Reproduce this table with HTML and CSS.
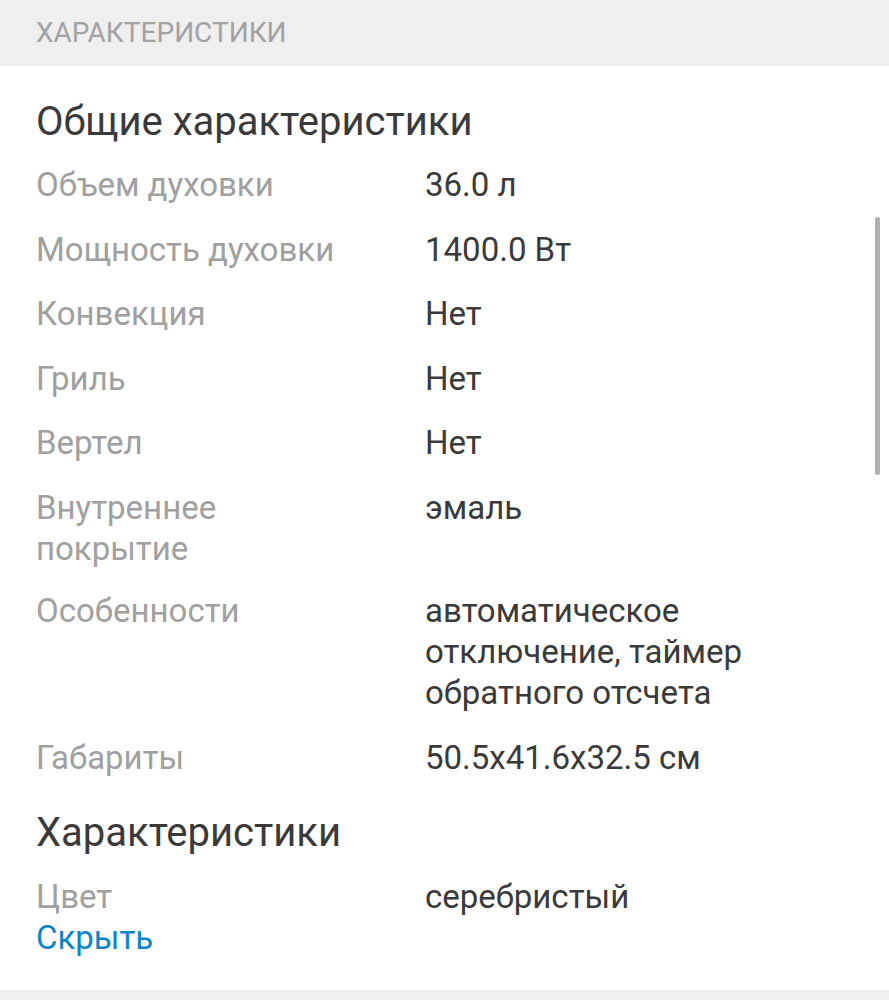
FILE: index.html
```html
<!DOCTYPE html>
<html lang="ru">
<head>
<meta charset="utf-8">
<link rel="stylesheet" href="styles.css">
</head>
<body>
<div class="page">
  <div class="band">ХАРАКТЕРИСТИКИ</div>
  <div class="content">
    <h2 class="group-title">Общие характеристики</h2>
    <div class="specs">
      <div class="row"><div class="label">Объем духовки</div><div class="value">36.0 л</div></div>
      <div class="row"><div class="label">Мощность духовки</div><div class="value">1400.0 Вт</div></div>
      <div class="row"><div class="label">Конвекция</div><div class="value">Нет</div></div>
      <div class="row"><div class="label">Гриль</div><div class="value">Нет</div></div>
      <div class="row"><div class="label">Вертел</div><div class="value">Нет</div></div>
      <div class="row"><div class="label">Внутреннее<br>покрытие</div><div class="value">эмаль</div></div>
      <div class="row"><div class="label">Особенности</div><div class="value">автоматическое<br>отключение, таймер<br>обратного отсчета</div></div>
      <div class="row"><div class="label">Габариты</div><div class="value">50.5x41.6x32.5 см</div></div>
    </div>
    <h2 class="group-title second">Характеристики</h2>
    <div class="specs">
      <div class="row last"><div class="label">Цвет</div><div class="value">серебристый</div></div>
    </div>
    <a class="toggle" href="#">Скрыть</a>
  </div>
  <div class="band bottom"></div>
  <div class="scrollbar"></div>
</div>
</body>
</html>
```
FILE: styles.css
```css
html, body {
  margin: 0;
  padding: 0;
  background: #ffffff;
}
body {
  font-family: Roboto, "Noto Sans", sans-serif;
  width: 889px;
  height: 1000px;
  overflow: hidden;
}
.page {
  position: relative;
  height: 1000px;
}
.band {
  height: 66px;
  background: #efefef;
  color: #a2a2a2;
  font-size: 28px;
  line-height: 66px;
  padding-left: 36px;
}
.content {
  padding: 0 36px;
}
.group-title {
  margin: 0;
  font-weight: 400;
  font-size: 40px;
  line-height: 48px;
  color: #3a3a3a;
  padding-top: 32px;
  padding-bottom: 18px;
}
.group-title.second {
  padding-top: 31px;
  padding-bottom: 19px;
}
.specs {
  display: flex;
  flex-direction: column;
  gap: 23.5px;
}
.specs .row:nth-child(7) {
  margin-top: -2px;
}
.row {
  display: grid;
  grid-template-columns: 389px 1fr;
  font-size: 33px;
  line-height: 41px;
}
.label {
  color: #a0a0a0;
}
.value {
  color: #3a3a3a;
}
.toggle {
  display: block;
  font-size: 33px;
  line-height: 41px;
  color: #0b85c9;
  text-decoration: none;
}
.band.bottom {
  position: absolute;
  left: 0;
  right: 0;
  top: 990px;
  height: 10px;
}
.scrollbar {
  position: absolute;
  right: 9px;
  top: 217px;
  width: 5px;
  height: 258px;
  border-radius: 3px;
  background: #b0b0b0;
}
```
